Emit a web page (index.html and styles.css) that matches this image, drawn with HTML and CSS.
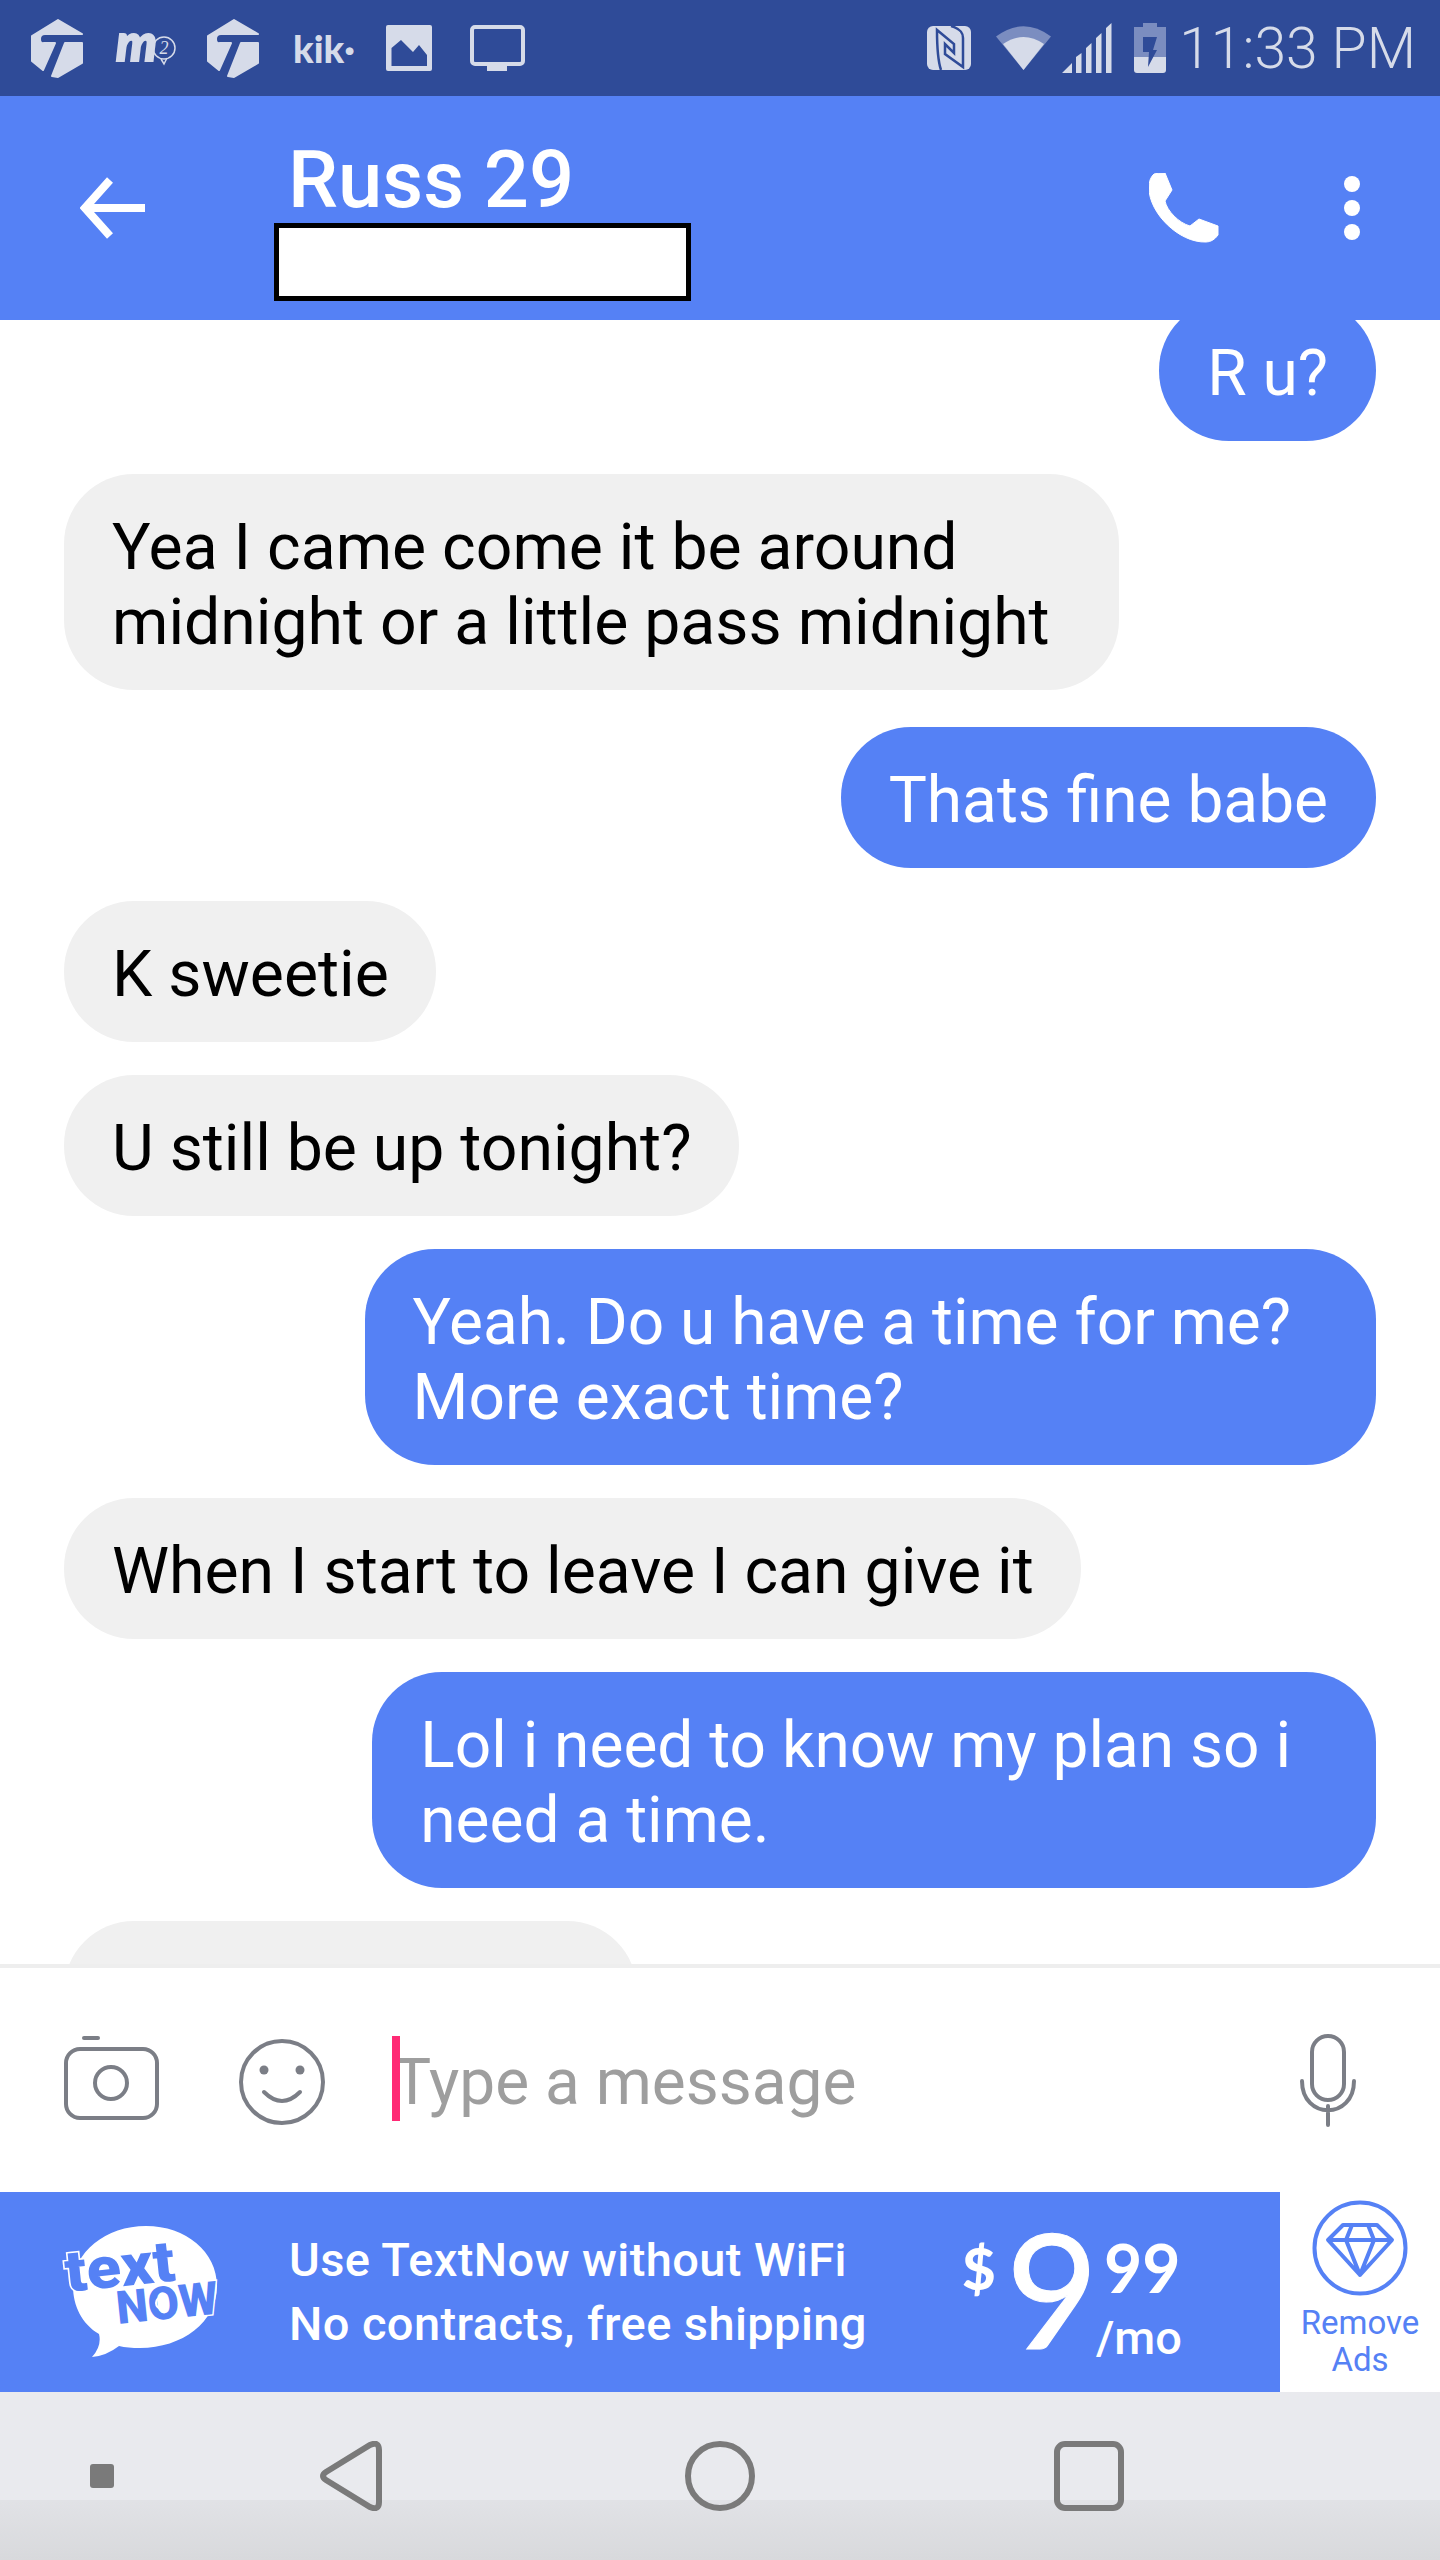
FILE: index.html
```html
<!DOCTYPE html>
<html lang="en">
<head>
<meta charset="UTF-8" />
<meta name="viewport" content="width=device-width, initial-scale=1" />
<title>Russ 29</title>
<link rel="stylesheet" href="styles.css">
</head>
<body>

<div class="phone">

  <!-- Status bar -->
  <div class="status-bar">
    <svg class="st-tn" viewBox="0 0 52 59"><path class="st-fill" d="M27 1L51 15H14Q9 15 9 20T13 24H24L12 51L1 42V17ZM51 24H34L21 57L27 58L51 44Z"/></svg>
    <svg class="st-m2" viewBox="0 0 60 34">
      <text class="m2-m" x="0" y="30" textLength="41" lengthAdjust="spacingAndGlyphs">m</text>
      <circle class="m2-ring" cx="48" cy="17" r="11"/>
      <path class="m2-ring" d="M45 28L48 33L51 27"/>
      <text class="m2-two" x="48" y="23" text-anchor="middle">2</text>
    </svg>
    <svg class="st-tn st-tn2" viewBox="0 0 52 59"><path class="st-fill" d="M27 1L51 15H14Q9 15 9 20T13 24H24L12 51L1 42V17ZM51 24H34L21 57L27 58L51 44Z"/></svg>
    <span class="st-kik">kik·</span>
    <svg class="st-pic" viewBox="0 0 46 46"><rect class="st-fill" width="46" height="46" rx="2"/><path class="st-cut" d="M5.500 41V23L15 15L27 27L33 20L41 30V41Z"/></svg>
    <svg class="st-mon" viewBox="0 0 55 46"><rect class="st-line" x="2" y="2" width="51" height="37" rx="3"/><rect class="st-fill" x="17" y="40" width="20" height="6"/></svg>

    <svg class="st-nfc" viewBox="0 0 44 44"><rect class="st-fill" width="44" height="44" rx="6"/><path class="nfc-cut" d="M14 44C11 35 10 15 10 4L27 18V27L18 18V28L36 41V12C36 7 34 3 24 0"/></svg>
    <svg class="st-wifi" viewBox="0 0 55 44"><path class="st-dim" d="M0 10.500Q27.500 -10 55 10.500L27.500 44Z"/><path class="st-fill" d="M7 18Q27.500 4 48 18L27.500 44Z"/></svg>
    <svg class="st-signal" viewBox="0 0 50 50"><path class="st-fill" d="M0 50L10 40V50ZM14 34L19.500 30V50H14ZM24 25L29.500 20V50H24ZM34 15L39.500 10V50H34ZM44 5L49.500 0V50H44Z"/></svg>
    <svg class="st-batt" viewBox="0 0 32 50"><path class="st-dim" d="M9 0H23V4H32V34H0V4H9Z"/><path class="st-fill" d="M0 34H32V47Q32 50 29 50H3Q0 50 0 47Z"/><path class="st-cut" d="M9 14H23L19 27H23L14 44L15 29H9Z"/></svg>
    <span class="st-time">11:33 PM</span>
  </div>

  <!-- Conversation header -->
  <header class="conv-header">
    <svg class="back-icon" viewBox="0 0 65 62"><path d="M65 31H6M30 3L5 31L30 59"/></svg>
    <div class="conv-title">
      <div class="conv-name">Russ 29</div>
      <div class="redacted"></div>
    </div>
    <svg class="call-icon" viewBox="0 0 70 70"><path d="M5 1Q8 0 16 0L23 17L16 28C18 38 30 50 41 53L50 46L69 53V62Q64 69 57 69C30 70 0 40 0 15Q0 5 5 1Z"/></svg>
    <div class="more-icon"><span></span><span></span><span></span></div>
  </header>

  <!-- Messages -->
  <main class="messages">
    <div class="bubble out first">R u?</div>
    <div class="bubble in wrap-a">Yea I came come it be around<br>midnight or a little pass midnight</div>
    <div class="bubble out after-in">Thats fine babe</div>
    <div class="bubble in">K sweetie</div>
    <div class="bubble in">U still be up tonight?</div>
    <div class="bubble out wrap-b">Yeah. Do u have a time for me?<br>More exact time?</div>
    <div class="bubble in">When I start to leave I can give it</div>
    <div class="bubble out wrap-b">Lol i need to know my plan so i<br>need a time.</div>
    <div class="bubble in partial"></div>
  </main>

  <!-- Composer -->
  <div class="composer">
    <div class="camera-icon">
      <svg viewBox="0 0 95 84"><path d="M20 2H34"/><rect x="2" y="13" width="91" height="69" rx="14"/><circle cx="47" cy="47" r="16"/></svg>
    </div>
    <svg class="smile-icon" viewBox="0 0 86 86"><circle cx="43" cy="43" r="41"/><circle class="eye" cx="25" cy="31" r="4.500"/><circle class="eye" cx="61" cy="31" r="4.500"/><path d="M25 53Q43 71 61 53"/></svg>
    <div class="msg-input"><span class="caret"></span>Type a message</div>
    <svg class="mic-icon" viewBox="0 0 56 93"><rect x="12" y="2" width="32" height="64" rx="16"/><path d="M2 47C2 86 54 86 54 47M28 72V91"/></svg>
  </div>

  <!-- Ad banner -->
  <div class="ad-row">
    <div class="ad">
      <svg class="tn-logo" viewBox="0 0 160 132">
        <path class="tn-bubble" d="M82 0C122 0 153 26 153 60C153 96 118 122 76 122Q64 122 55 120Q42 130 28 131Q38 120 35 108C18 98 9 80 9 60C9 26 42 0 82 0Z"/>
        <text class="tn-word tn-text" transform="translate(3 66) rotate(-6)" textLength="110" lengthAdjust="spacingAndGlyphs">text</text>
        <text class="tn-word tn-now" transform="translate(54 98) rotate(-6)" textLength="102" lengthAdjust="spacingAndGlyphs">NOW</text>
        <circle class="tn-ring" cx="98" cy="77" r="6"/>
      </svg>
      <div class="ad-copy">
        <div>Use TextNow without WiFi</div>
        <div>No contracts, free shipping</div>
      </div>
      <div class="price">
        <span class="price-cur">$</span>
        <span class="price-big">9</span>
        <div class="price-side">
          <span class="price-cents">99</span>
          <span class="price-mo">/mo</span>
        </div>
      </div>
    </div>
    <div class="remove-ads">
      <svg class="gem-icon" viewBox="0 0 96 96"><circle cx="48" cy="48" r="45.500"/><path d="M31 25H65L80 40L48 75L16 40ZM16 40H80M40 25L34 40L48 75L62 40L56 25"/></svg>
      <div class="remove-label">Remove<br>Ads</div>
    </div>
  </div>

  <!-- Nav bar -->
  <nav class="nav-bar">
    <span class="nav-dot"></span>
    <svg class="nav-back" viewBox="0 0 62 70"><path d="M6 31L50 4Q59 0 59 9V61Q59 70 50 66L6 39Q0 35 6 31Z"/></svg>
    <span class="nav-home"></span>
    <span class="nav-recent"></span>
  </nav>

</div>

</body>
</html>
```

FILE: styles.css
```css
body {
  margin: 0;
  background: #fff;
  font-family: Roboto, "Liberation Sans", sans-serif;
}

.phone {
  width: 1440px;
  height: 2560px;
  display: flex;
  flex-direction: column;
  overflow: hidden;
}

/* Status bar */
.status-bar {
  height: 96px;
  flex: none;
  display: flex;
  align-items: center;
  padding: 0 24px 0 31px;
  box-sizing: border-box;
  background: #2f4b98;
  color: #d6dbe9;
}

.st-fill { fill: #d6dbe9; }
.st-dim { fill: #7b8dc0; }
.st-cut { fill: #2f4b98; }
.st-line { fill: none; stroke: #d6dbe9; stroke-width: 4; }

.st-tn { width: 52px; height: 59px; }
.st-tn path { stroke: #d6dbe9; stroke-width: 2; stroke-linejoin: round; }
.st-tn2 { margin-left: 31px; }

.st-m2 { width: 60px; height: 34px; margin-left: 33px; overflow: visible; }
.m2-m {
  font-family: Lato, sans-serif;
  font-weight: 900;
  font-style: italic;
  font-size: 52px;
  fill: #d6dbe9;
  stroke: #d6dbe9;
  stroke-width: 2;
}
.m2-ring { fill: none; stroke: #d6dbe9; stroke-width: 1.500; }
.m2-two {
  font-family: "Liberation Serif", serif;
  font-style: italic;
  font-size: 18px;
  fill: #d6dbe9;
}

.st-kik {
  width: 56px;
  margin-left: 34px;
  font-family: Lato, sans-serif;
  font-weight: 900;
  font-size: 38px;
  line-height: 48px;
  white-space: nowrap;
}

.st-pic { width: 46px; height: 46px; margin-left: 37px; }
.st-mon { width: 55px; height: 46px; margin-left: 38px; }

.st-nfc { width: 44px; height: 44px; margin-left: auto; }
.nfc-cut { fill: none; stroke: #2f4b98; stroke-width: 2.500; }
.st-wifi { width: 55px; height: 44px; margin-left: 25px; }
.st-signal { width: 50px; height: 50px; margin-left: 11px; }
.st-batt { width: 32px; height: 50px; margin-left: 22px; }

.st-time {
  margin-left: 13px;
  font-size: 57px;
  font-weight: 300;
  line-height: 96px;
  padding-top: 2px;
  white-space: nowrap;
}

/* Header */
.conv-header {
  height: 224px;
  flex: none;
  display: flex;
  align-items: center;
  box-sizing: border-box;
  padding-left: 80px;
  background: #5581f5;
  color: #fff;
}

.back-icon { width: 65px; height: 62px; flex: none; }
.back-icon path { fill: none; stroke: #fff; stroke-width: 8; }

.conv-title {
  width: 417px;
  margin-left: 129px;
  padding-top: 22px;
}

.conv-name {
  font-size: 79.500px;
  font-weight: 500;
  line-height: 84px;
  margin-left: 14px;
}

.redacted {
  height: 78px;
  box-sizing: border-box;
  margin-top: 1px;
  background: #fff;
  border: 5px solid #000;
}

.call-icon { width: 70px; height: 70px; margin-left: 458px; flex: none; }
.call-icon path { fill: #fff; stroke: #fff; stroke-width: 1; stroke-linejoin: round; }

.more-icon {
  display: flex;
  flex-direction: column;
  gap: 8px;
  margin-left: 125px;
}

.more-icon span {
  width: 16px;
  height: 16px;
  border-radius: 50%;
  background: #fff;
}

/* Messages */
.messages {
  flex: 1;
  min-height: 0;
  overflow: hidden;
  display: flex;
  flex-direction: column;
  align-items: flex-start;
  gap: 32.500px;
  padding: 0 64px;
  border-bottom: 4px solid #eeeeee;
}

.bubble {
  flex: none;
  padding: 36.500px 47px 30px 48px;
  border-radius: 70px;
  font-size: 64.300px;
  line-height: 75px;
  white-space: nowrap;
  color: #000;
  background: #f0f0f0;
}

.bubble.out {
  align-self: flex-end;
  padding-right: 48px;
  font-size: 64px;
  color: #fff;
  background: #5581f5;
}

.bubble.first { margin-top: -20.500px; }
.bubble.after-in { margin-top: 4px; }
.bubble.wrap-a { padding-right: 69px; }
.bubble.wrap-b { padding-right: 85px; }
.bubble.partial { width: 573px; height: 142px; padding: 0; box-sizing: border-box; }

/* Composer */
.composer {
  height: 224px;
  flex: none;
  display: flex;
  align-items: center;
  padding-left: 64px;
}

.composer svg { fill: none; stroke: #7b7e86; stroke-width: 4; stroke-linecap: round; }

.camera-icon { line-height: 0; margin-top: -5px; }
.camera-icon svg { width: 95px; height: 84px; }

.smile-icon { width: 86px; height: 86px; margin: 4px 0 0 80px; }
.smile-icon .eye { fill: #7b7e86; stroke: none; }

.msg-input {
  position: relative;
  margin-left: 68px;
  padding-top: 6px;
  width: 900px;
  font-size: 64px;
  line-height: 92px;
  color: #9e9e9e;
}

.caret {
  position: absolute;
  left: -1px;
  top: 5px;
  width: 8px;
  height: 85px;
  background: #ff2a75;
}

.mic-icon { width: 56px; height: 93px; margin-left: 7px; flex: none; }

/* Ad */
.ad-row {
  height: 200px;
  flex: none;
  display: flex;
}

.ad {
  width: 1280px;
  display: flex;
  align-items: center;
  padding-left: 64px;
  box-sizing: border-box;
  background: #5581f5;
  color: #fff;
}

.tn-logo { width: 160px; height: 132px; flex: none; overflow: visible; }
.tn-bubble { fill: #fff; }
.tn-word {
  font-family: Roboto, sans-serif;
  font-weight: 900;
  fill: #5581f5;
  stroke: #fff;
  stroke-width: 3;
  paint-order: stroke;
}
.tn-text { font-size: 58px; }
.tn-now { font-size: 46px; }
.tn-ring { fill: none; stroke: #fff; stroke-width: 2; }

.ad-copy {
  margin-left: 65px;
  width: 650px;
  font-size: 47px;
  font-weight: 500;
  line-height: 64px;
  letter-spacing: 0.4px;
  white-space: nowrap;
}

.price {
  position: relative;
  display: flex;
  align-items: flex-start;
  margin-left: 23px;
  height: 200px;
}

.price-cur {
  margin-top: 39px;
  font-family: Lato, sans-serif;
  font-weight: 900;
  font-size: 58px;
  line-height: 74px;
}

.price-big {
  margin: 0 0 0 10px;
  font-family: Lato, sans-serif;
  font-size: 160px;
  line-height: 190px;
  -webkit-text-stroke: 1px #fff;
}

.price-side {
  display: flex;
  flex-direction: column;
  margin-left: -6.500px;
}

.price-cents {
  margin-top: 43px;
  margin-left: 12px;
  font-family: Lato, sans-serif;
  font-weight: 700;
  font-size: 66px;
  line-height: 66px;
}

.price-mo {
  margin-top: 9px;
  margin-left: 4px;
  font-size: 47px;
  font-weight: 500;
  line-height: 56px;
}

.remove-ads {
  flex: 1;
  display: flex;
  flex-direction: column;
  align-items: center;
  color: #5581f5;
}

.gem-icon { width: 96px; height: 96px; margin-top: 8px; flex: none; }
.gem-icon * { fill: none; stroke: #5581f5; stroke-width: 4; stroke-linejoin: round; }

.remove-label {
  text-align: center;
  font-size: 33px;
  line-height: 37px;
  margin-top: 8px;
}

/* Nav bar */
.nav-bar {
  height: 168px;
  flex: none;
  display: flex;
  align-items: flex-start;
  box-sizing: border-box;
  padding: 49px 0 0 90px;
  background: linear-gradient(#e9eaee 108px, #e1e2e6 108px, #d8d9dc 168px);
}

.nav-dot {
  width: 24px;
  height: 24px;
  margin-top: 23px;
  border-radius: 3px;
  background: #7a7a7a;
}

.nav-back { width: 62px; height: 70px; margin-left: 206px; }
.nav-back path { fill: none; stroke: #7a7a7a; stroke-width: 6; }

.nav-home {
  width: 70px;
  height: 70px;
  box-sizing: border-box;
  margin-left: 303px;
  border: 6px solid #7a7a7a;
  border-radius: 50%;
}

.nav-recent {
  width: 70px;
  height: 70px;
  box-sizing: border-box;
  margin-left: 299px;
  border: 6px solid #7a7a7a;
  border-radius: 11px;
}
```
